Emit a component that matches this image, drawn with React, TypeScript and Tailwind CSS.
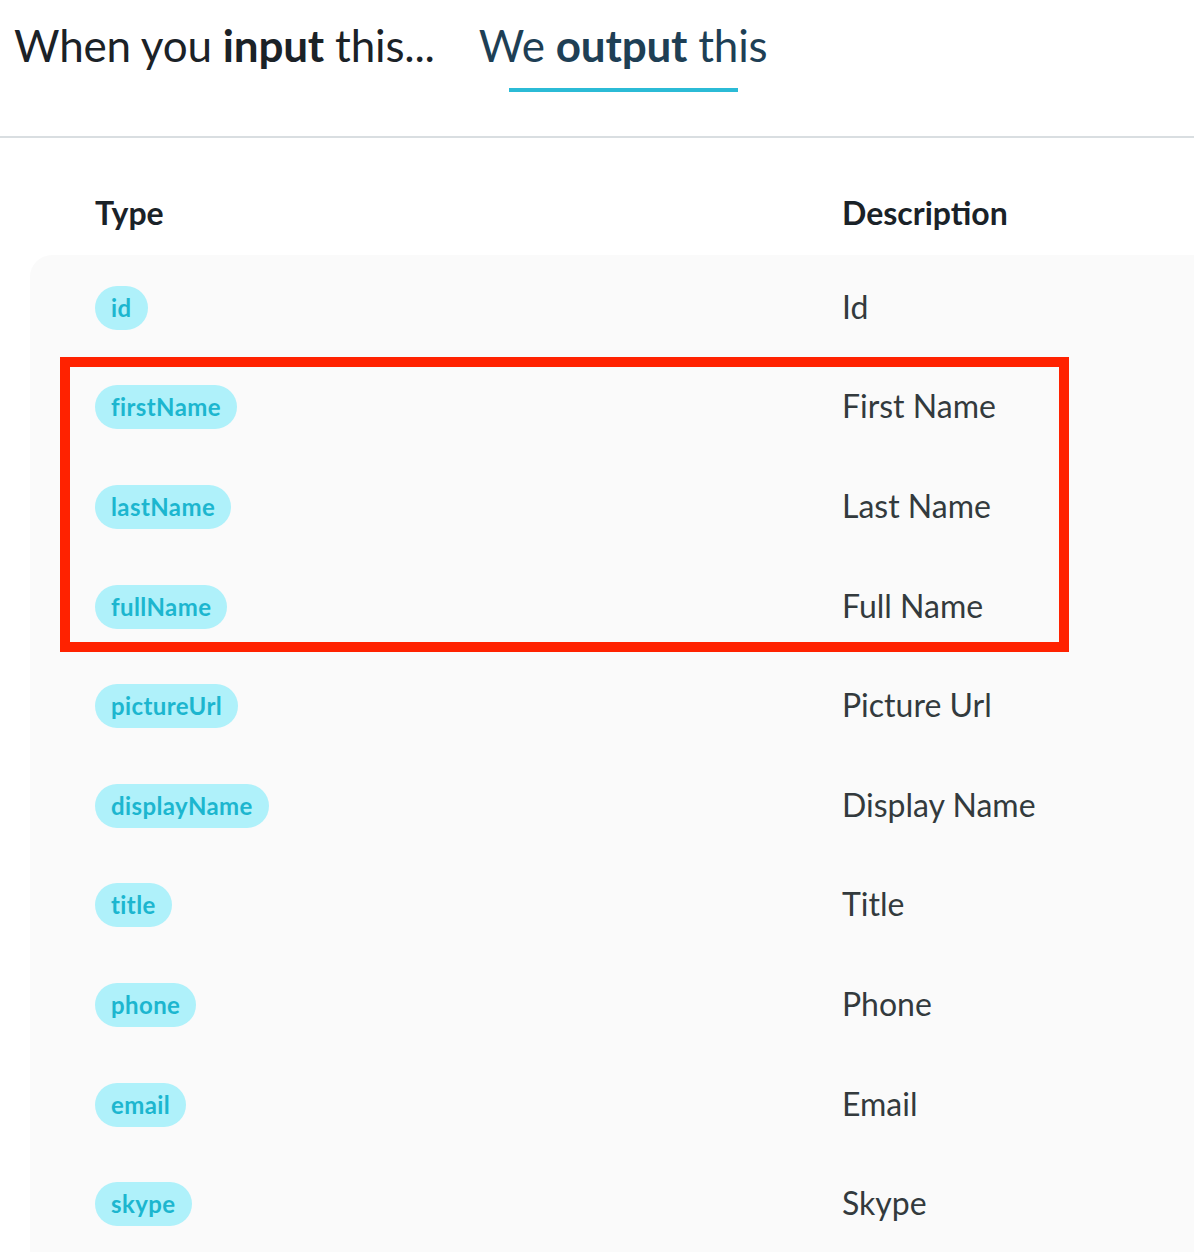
const rows = [
  { type: 'id', desc: 'Id' },
  { type: 'firstName', desc: 'First Name' },
  { type: 'lastName', desc: 'Last Name' },
  { type: 'fullName', desc: 'Full Name' },
  { type: 'pictureUrl', desc: 'Picture Url' },
  { type: 'displayName', desc: 'Display Name' },
  { type: 'title', desc: 'Title' },
  { type: 'phone', desc: 'Phone' },
  { type: 'email', desc: 'Email' },
  { type: 'skype', desc: 'Skype' },
]

export default function App() {
  return (
    <div className="min-h-screen bg-white font-['Lato',sans-serif] overflow-hidden">
      {/* Tabs */}
      <div className="flex items-start border-b-2 border-[#d9dee1] h-[138px]">
        <div className="pl-[14px] pt-[17px] pr-[44px] text-[44px] leading-[56px] text-[#1b2227] tracking-[-0.2px]">
          When you <span className="font-bold">input</span> this...
        </div>
        <div className="flex flex-col items-center pt-[17px]">
          <div className="text-[44px] leading-[56px] text-[#1e3f55] tracking-[-0.2px]">
            We <span className="font-bold">output</span> this
          </div>
          <div className="mt-[15px] h-1 w-[229px] bg-[#2bbbd6]" />
        </div>
      </div>

      {/* Table header */}
      <div className="flex h-[117px] pt-[55px] pl-[95px] text-[32px] leading-[40px] font-bold text-[#1a2228]">
        <div className="w-[747px]">Type</div>
        <div>Description</div>
      </div>

      {/* Table body */}
      <div className="relative ml-[30px] rounded-tl-[22px] bg-[#fafafa] pt-[2px] pb-10">
        {rows.map((r) => (
          <div key={r.type} className="flex items-center h-[99.6px] pl-[65px]">
            <div className="w-[747px] pt-[2px]">
              <span className="inline-flex items-center h-[44px] px-4 rounded-full bg-[#aff1fa] text-[#1cb6cf] text-[24px] font-bold tracking-[0.4px]">
                {r.type}
              </span>
            </div>
            <div className="text-[32px] text-[#333a3d]">{r.desc}</div>
          </div>
        ))}

        {/* highlight annotation */}
        <div className="absolute left-[30px] top-[102px] w-[1009px] h-[295px] border-[10px] border-[#ff2200] pointer-events-none" />
      </div>
    </div>
  )
}
